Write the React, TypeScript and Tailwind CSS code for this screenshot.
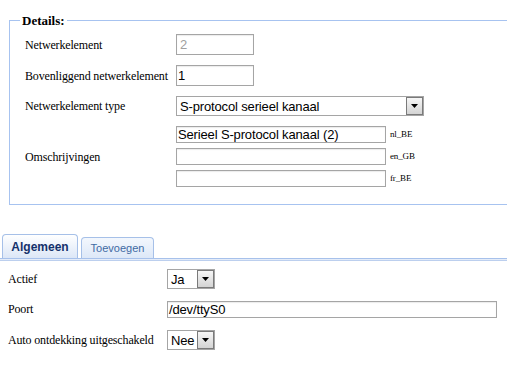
import React from 'react';

const serif = "font-['Times_New_Roman','Liberation_Serif',serif]";
const sans = "font-['Arial','Liberation_Sans',sans-serif]";

function TextBox({ value, width, height, disabled }: { value?: string; width: string; height: string; disabled?: boolean }) {
  return (
    <div
      className={`${width} ${height} ${sans} flex items-center border border-[#a5a5a5] bg-white pl-[1px] text-[13px] leading-none shadow-[inset_0_1px_1px_rgba(0,0,0,0.08)] ${
        disabled ? 'text-[#a0a0a0] pl-[3px]' : 'text-black'
      }`}
    >
      {value}
    </div>
  );
}

function SelectBox({ value, width }: { value: string; width: string }) {
  return (
    <div className={`${width} h-[20px] ${sans} flex items-stretch border border-[#a5a5a5] bg-white text-[13px] text-black`}>
      <div className="flex flex-1 items-center pl-[3px] leading-none">{value}</div>
      <div className="flex w-[17px] items-center justify-center border border-[#7a7a7a] bg-gradient-to-b from-[#f6f6f6] to-[#d4d4d4]">
        <svg width="7" height="4" viewBox="0 0 7 4">
          <path d="M0 0h7L3.5 4z" fill="#000" />
        </svg>
      </div>
    </div>
  );
}

export default function App() {
  return (
    <div className={`h-[378px] w-[507px] overflow-hidden bg-white ${serif} text-[12px] tracking-[-0.15px] text-black`}>
      {/* Details */}
      <fieldset className="ml-[9px] mt-[13px] w-[520px] border border-[#a7c3f0] pb-[17px] pl-[10px]">
        <legend className="px-[2px] text-[13px] font-bold leading-[15px] tracking-normal">Details:</legend>

        <div className="ml-[5px] mt-[6px] flex flex-col gap-[10px]">
          <div className="flex items-center">
            <div className="w-[151px]">Netwerkelement</div>
            <TextBox value="2" width="w-[78px]" height="h-[21px]" disabled />
          </div>
          <div className="flex items-center">
            <div className="w-[151px]">Bovenliggend netwerkelement</div>
            <TextBox value="1" width="w-[78px]" height="h-[21px]" />
          </div>
          <div className="flex items-center">
            <div className="w-[151px]">Netwerkelement type</div>
            <SelectBox value="S-protocol serieel kanaal" width="w-[248px]" />
          </div>
          <div className="flex items-center">
            <div className="w-[151px]">Omschrijvingen</div>
            <div className="flex flex-col gap-[5px]">
              {[
                ['Serieel S-protocol kanaal (2)', 'nl_BE'],
                ['', 'en_GB'],
                ['', 'fr_BE'],
              ].map(([v, loc]) => (
                <div key={loc} className="flex items-center">
                  <TextBox value={v} width="w-[210px]" height="h-[17px]" />
                  <span className="ml-[4px] text-[9px]">{loc}</span>
                </div>
              ))}
            </div>
          </div>
        </div>
      </fieldset>

      {/* Tabs */}
      <div className={`mt-[29px] ${sans} tracking-normal`}>
        <div className="flex items-end pl-[2px]">
          <div className="flex h-[24px] w-[76px] items-center justify-center rounded-t-[4px] border border-b-0 border-[#a6c0e8] bg-gradient-to-b from-white to-[#dce7f7] text-[12px] font-bold text-[#15316b]">
            Algemeen
          </div>
          <div className="ml-[3px] flex h-[21px] w-[73px] items-center justify-center rounded-t-[4px] border border-b-0 border-[#a6c0e8] bg-gradient-to-b from-[#f3f7fd] to-[#dde8f8] text-[11px] text-[#416aa3]">
            Toevoegen
          </div>
        </div>
        <div className="h-[1px] bg-[#a7c1eb]" />
        <div className="h-[1px] bg-[#e4ecf9]" />
        <div className="h-[1px] bg-[#bccfee]" />
      </div>

      {/* Algemeen */}
      <div className="ml-[8px] mt-[8px] flex flex-col">
        <div className="flex items-center">
          <div className="w-[159px]">Actief</div>
          <SelectBox value="Ja" width="w-[48px]" />
        </div>
        <div className="mt-[11px] flex items-center">
          <div className="w-[159px]">Poort</div>
          <TextBox value="/dev/ttyS0" width="w-[330px]" height="h-[17px]" />
        </div>
        <div className="mt-[12px] flex items-center">
          <div className="w-[159px]">Auto ontdekking uitgeschakeld</div>
          <SelectBox value="Nee" width="w-[48px]" />
        </div>
      </div>
    </div>
  );
}
